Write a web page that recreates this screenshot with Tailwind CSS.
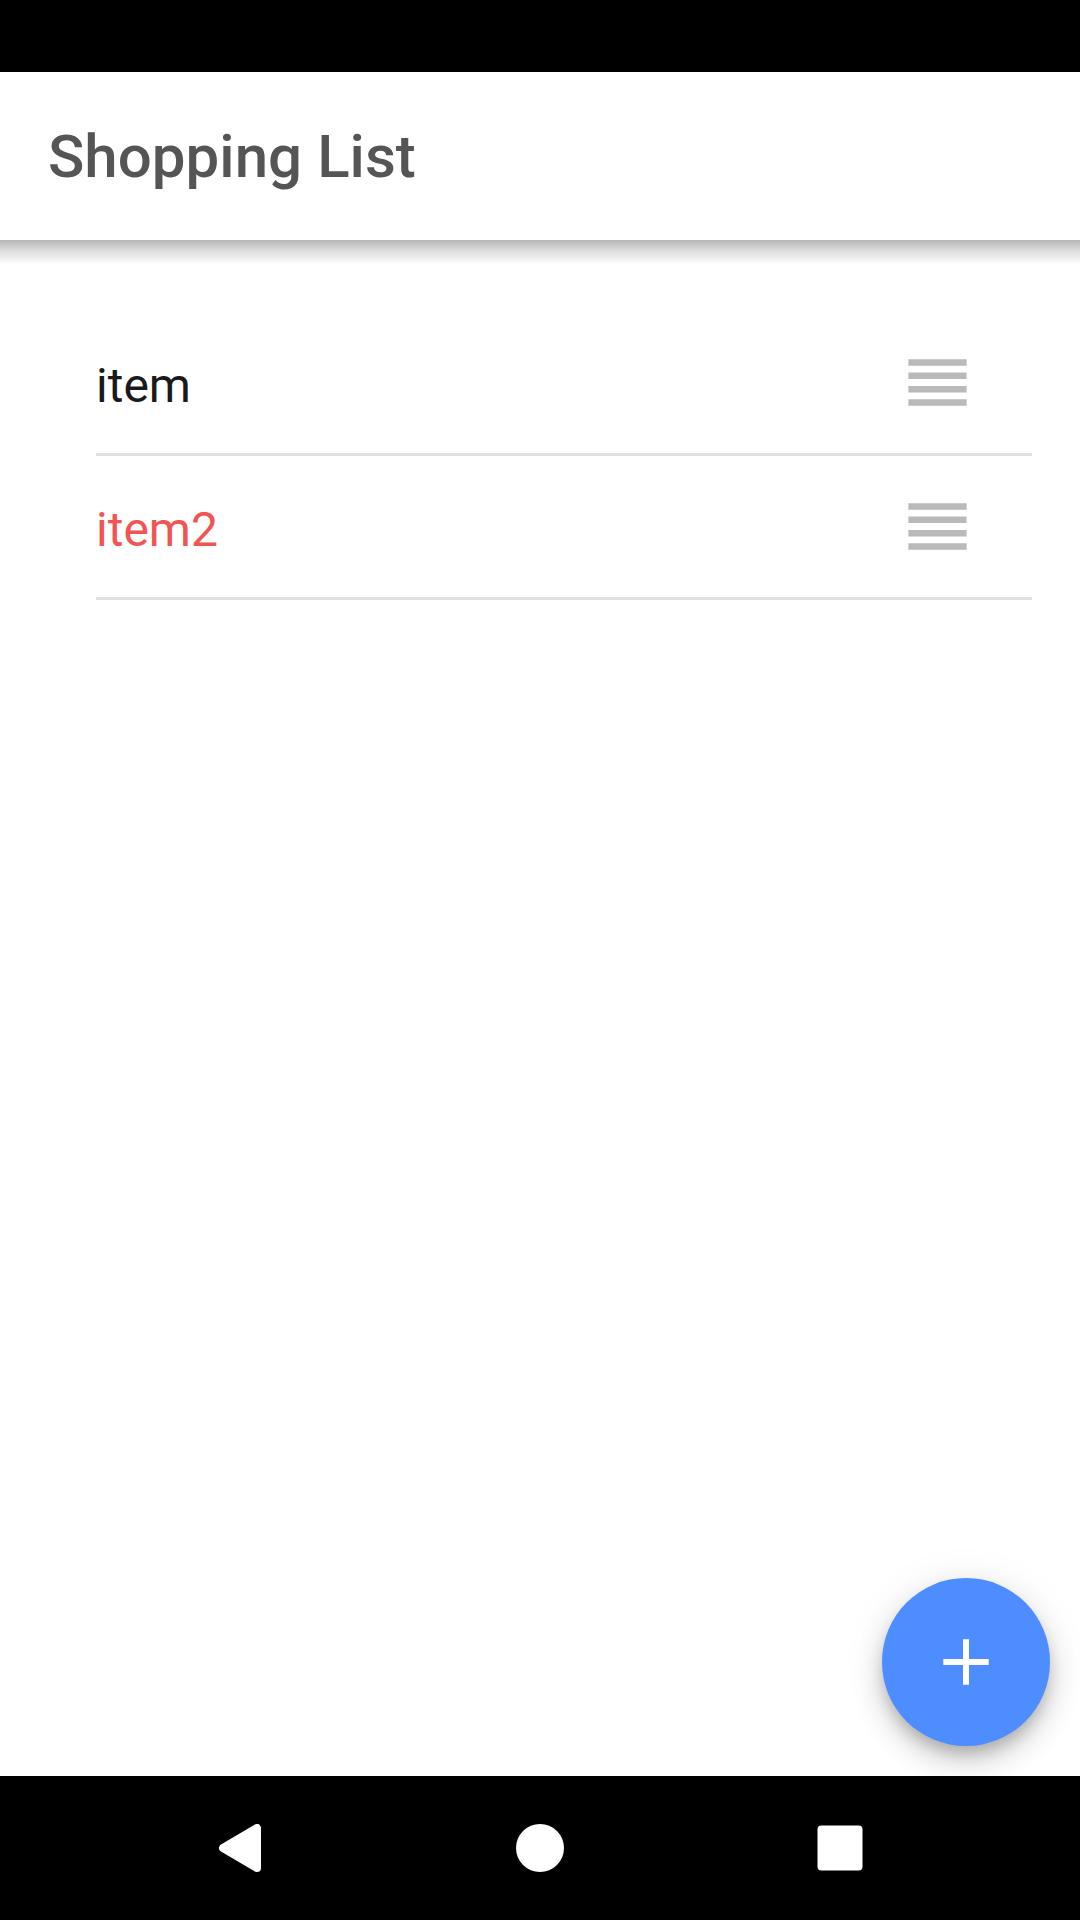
<!DOCTYPE html>
<html lang="en">
<head>
<meta charset="utf-8">
<title>Shopping List</title>
<script src="https://cdn.jsdelivr.net/npm/@tailwindcss/browser@4"></script>
</head>
<body class="bg-white">
<div class="flex h-[1920px] w-[1080px] flex-col overflow-hidden bg-white font-[Roboto,sans-serif]">
  <div class="h-[72px] shrink-0 bg-black"></div>
  <header class="flex h-[168px] shrink-0 items-center bg-white pt-0.5 pl-12">
    <h1 class="text-[60px] leading-[72px] font-medium tracking-[0.04px] text-[#555555]">Shopping List</h1>
  </header>
  <main class="flex grow flex-col">
    <div class="h-6 shrink-0 bg-linear-to-b from-[#b5b5b5] via-[#dddddd] via-45% to-[#fdfdfd]"></div>
    <ul class="mt-12 pr-12 pl-24">
      <li class="flex h-36 items-center justify-between border-b-[3px] border-[#e0e0e0] pr-[65px]">
        <span class="pt-1.5 text-[48px] leading-[72px] text-[#1a1a1a]">item</span>
        <svg class="h-[48px] w-[59px]" viewBox="0 0 59 48" fill="#b9b9b9"><path d="M.4.3h58.2v6.5H.4zM.4 13.6h58.2v6.5H.4zM.4 26.9h58.2v6.5H.4zM.4 40.2h58.2v6.5H.4z"/></svg>
      </li>
      <li class="flex h-36 items-center justify-between border-b-[3px] border-[#e0e0e0] pr-[65px]">
        <span class="pt-1.5 text-[48px] leading-[72px] text-[#f25454]">item2</span>
        <svg class="h-[48px] w-[59px]" viewBox="0 0 59 48" fill="#b9b9b9"><path d="M.4.3h58.2v6.5H.4zM.4 13.6h58.2v6.5H.4zM.4 26.9h58.2v6.5H.4zM.4 40.2h58.2v6.5H.4z"/></svg>
      </li>
    </ul>
    <button aria-label="Add item" class="mt-auto mr-[30px] mb-[30px] flex size-[168px] items-center justify-center self-end rounded-full bg-[#4d8dff] shadow-[0_9px_15px_-3px_rgba(0,0,0,0.2),0_15px_30px_0_rgba(0,0,0,0.16),0_3px_45px_0_rgba(0,0,0,0.07)]">
      <svg class="size-12" viewBox="0 0 48 48" fill="none" stroke="#fff" stroke-width="6"><path d="M24 1.3v45.4M1.3 24h45.4"/></svg>
    </button>
  </main>
  <nav class="relative flex h-36 shrink-0 items-center justify-between bg-black px-[216px]">
    <svg class="size-12" viewBox="0 0 48 48"><path d="M7 24 41 4v40z" fill="#fff" stroke="#fff" stroke-width="8" stroke-linejoin="round"/></svg>
    <div class="size-12 rounded-full bg-white"></div>
    <svg class="size-12" viewBox="0 0 48 48"><rect x="1.5" y="1.5" width="45" height="45" rx="4" fill="#fff"/></svg>
  </nav>
</div>
</body>
</html>
